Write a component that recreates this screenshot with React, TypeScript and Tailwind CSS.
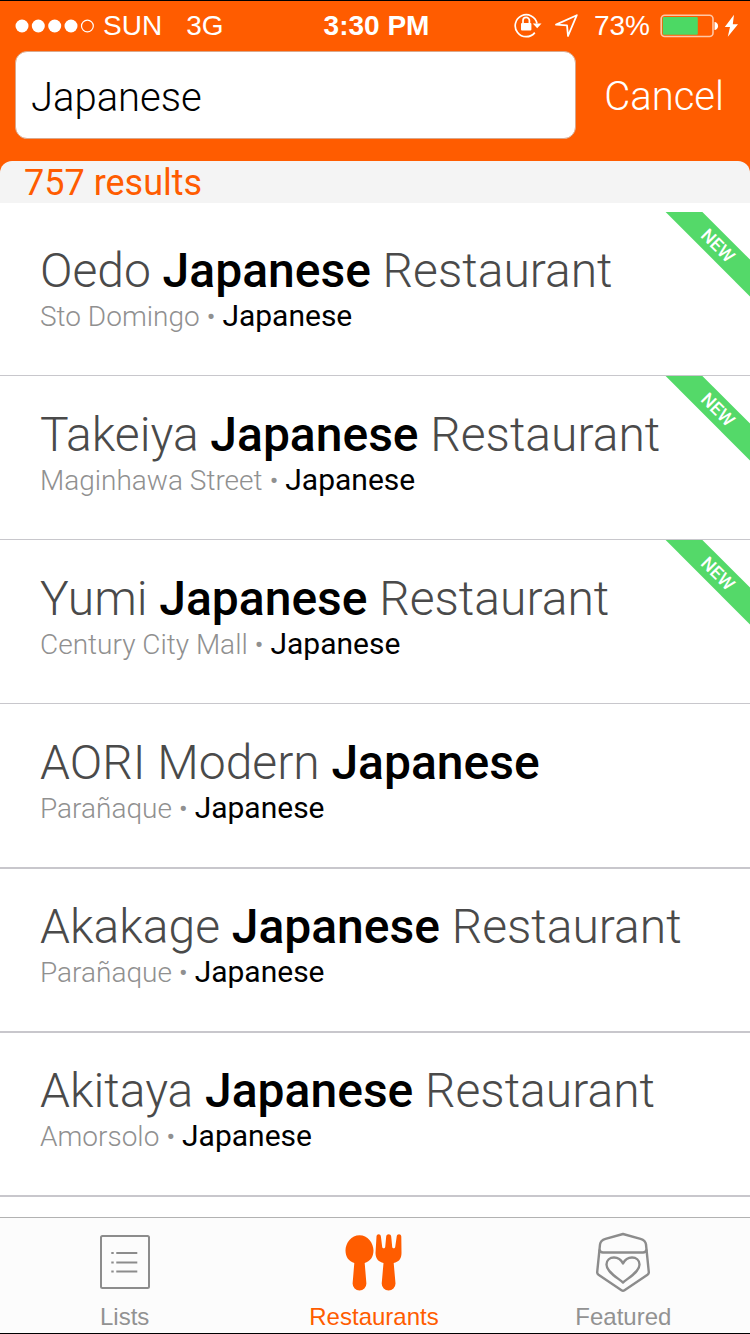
import { useState } from 'react';

type Restaurant = {
  before: string;
  after?: string;
  area: string;
  isNew?: boolean;
};

const restaurants: Restaurant[] = [
  { before: 'Oedo', after: 'Restaurant', area: 'Sto Domingo', isNew: true },
  { before: 'Takeiya', after: 'Restaurant', area: 'Maginhawa Street', isNew: true },
  { before: 'Yumi', after: 'Restaurant', area: 'Century City Mall', isNew: true },
  { before: 'AORI Modern', area: 'Parañaque' },
  { before: 'Akakage', after: 'Restaurant', area: 'Parañaque' },
  { before: 'Akitaya', after: 'Restaurant', area: 'Amorsolo' },
];

function SignalDots() {
  return (
    <svg width="80" height="14" viewBox="0 0 80 14" fill="#fff" aria-hidden="true">
      <circle cx="7" cy="7" r="6.5" />
      <circle cx="23.3" cy="7" r="6.5" />
      <circle cx="39.7" cy="7" r="6.5" />
      <circle cx="56" cy="7" r="6.5" />
      <circle cx="72.4" cy="7" r="5.9" fill="none" stroke="#fff" strokeWidth="1.2" />
    </svg>
  );
}

function RotationLockIcon() {
  return (
    <svg width="28" height="26" viewBox="0 0 28 26" fill="none" stroke="#fff" aria-hidden="true">
      <path d="M20.8 19.6A11 11 0 1 1 23 10.5" strokeWidth="1.7" />
      <path d="M18.8 10.5h8.7l-4.3 4.7z" fill="#fff" stroke="none" />
      <rect x="7" y="10" width="10.4" height="7.5" rx="1" fill="#fff" stroke="none" />
      <path d="M9 10.5V7.6a3.2 3.2 0 0 1 6.4 0v2.9" strokeWidth="1.7" />
    </svg>
  );
}

function LocationIcon() {
  return (
    <svg width="24" height="24" viewBox="0 0 24 24" fill="none" stroke="#fff" strokeWidth="1.8" aria-hidden="true">
      <path d="M22.8 1.2 2 10.6 13 11.4 14 22z" strokeLinejoin="round" />
    </svg>
  );
}

function BatteryIcon() {
  return (
    <svg width="78" height="24" viewBox="0 0 78 24" aria-hidden="true">
      <rect x="1.2" y="1.3" width="51.8" height="21.2" rx="3.5" fill="none" stroke="#ffc7a6" strokeWidth="1.6" />
      <rect x="2.8" y="3" width="35" height="17.8" rx="1" fill="#4cd964" />
      <path d="M54.5 8c2 0 3.6 1.7 3.6 4s-1.6 4-3.6 4z" fill="#fff" />
      <path d="M74 .8 64.8 13H70l-2.200 9.800L78 10.300h-5.200z" fill="#fff" />
    </svg>
  );
}

function ListsIcon() {
  return (
    <svg width="50" height="60" viewBox="0 0 50 60" fill="none" stroke="#8c8c8c" strokeWidth="2" aria-hidden="true">
      <rect x="1" y="4" width="48" height="52" rx="1.5" />
      <path d="M16.3 21h21M16.3 30.5h21M16.3 39.5h21M11.3 21h2.4M11.3 30.5h2.4M11.3 39.5h2.4" />
    </svg>
  );
}

function CutleryIcon() {
  return (
    <svg width="58" height="60" viewBox="0 0 58 60" fill="#ff5c00" aria-hidden="true">
      <path d="M14.5 3.3C22.5 3.3 28.5 11 28.5 18.5C28.5 25 25 29.5 19.7 31L21.4 51.5A6.900 6.900 0 0 1 7.600 51.5L9.300 31C4 29.500.5 25 .5 18.500C.5 11 6.500 3.300 14.500 3.300Z" />
      <path d="M31.5 4.5C31.7 1.5 35.6 1.5 35.9 4.500L37.200 15C37.400 16.700 40 16.700 40.200 15L41.200 4.500C41.500 1.500 45.900 1.500 46.200 4.500L47.200 15C47.400 16.700 50 16.700 50.200 15L51.700 4.500C52 1.500 56 1.500 56.300 4.500L56.500 21C56.500 27 53.500 30 48.700 31L50.500 51.500A6.900 6.900 0 0 1 36.700 51.500L38.500 31C34 30 30.500 27 30.500 21Z" />
    </svg>
  );
}

function ShieldHeartIcon() {
  return (
    <svg width="56" height="60" viewBox="0 0 56 60" fill="none" stroke="#8c8c8c" strokeWidth="2.4" strokeLinejoin="round" aria-hidden="true">
      <path d="M28 2 45.5 6.800Q50.500 8.200 51 12.500L53.800 40Q54 41.700 52.500 42.700L29.500 58.200Q28 59.200 26.500 58.200L3.500 42.700Q2 41.700 2.200 40L5 12.500Q5.500 8.200 10.500 6.800Z" />
      <path d="M4.500 17.500Q5 20.500 8 20.500H48Q51 20.500 51.500 17.500" />
      <path d="M28 50.500C23 46 11.500 40 11.500 32.500C11.500 28 15 25.500 19 25.500C23.500 25.500 26.500 28.500 28 31.500C29.500 28.500 32.500 25.500 37 25.500C41 25.500 44.500 28 44.500 32.500C44.500 40 33 46 28 50.500Z" />
    </svg>
  );
}

const tabs = [
  { label: 'Lists', Icon: ListsIcon, active: false },
  { label: 'Restaurants', Icon: CutleryIcon, active: true },
  { label: 'Featured', Icon: ShieldHeartIcon, active: false },
];

function NewRibbon() {
  return (
    <div className="absolute top-0 right-0 size-[85px] overflow-hidden">
      <span className="absolute top-5 -left-7 block w-40 rotate-45 bg-[#54d969] pl-0.5 text-center text-[18px] leading-[26px] font-medium text-white">
        NEW
      </span>
    </div>
  );
}

function RestaurantRow({ restaurant }: { restaurant: Restaurant }) {
  const { before, after, area, isNew } = restaurant;
  return (
    <li className={`relative shrink-0 border-b border-[#c8c7cc] ${isNew ? '' : 'shadow-[0_1px_0_#c8c7cc]'}`}>
      <a href="#restaurant" className="block px-10 pt-8 pb-10">
        <h2 className="text-[48px] leading-[54px] font-light whitespace-nowrap text-[#4a4a4a]">
          {before} <span className="font-medium text-black">Japanese</span> {after}
        </h2>
        <p className="text-[28px] leading-[37px] font-light whitespace-nowrap text-[#909090]">
          {area} • <span className="text-[30px] leading-none font-normal text-black">Japanese</span>
        </p>
      </a>
      {isNew && <NewRibbon />}
    </li>
  );
}

export default function App() {
  const [query, setQuery] = useState('Japanese');

  return (
    <div className="flex h-screen flex-col overflow-hidden border-y border-black bg-white font-[Roboto,sans-serif]">
      <header className="shrink-0 bg-[#ff5c00]">
        <div className="grid h-[50px] grid-cols-[1fr_auto_1fr] items-center pr-3 pl-[15px] font-['Liberation_Sans',sans-serif] text-[28px] leading-8 text-white">
          <div className="flex items-center gap-2">
            <SignalDots />
            <span>SUN</span>
            <span className="ml-4">3G</span>
          </div>
          <div className="font-bold">3:30 PM</div>
          <div className="flex items-center justify-end gap-2">
            <RotationLockIcon />
            <span className="mr-2 ml-1">
              <LocationIcon />
            </span>
            <span className="mr-0.5">73%</span>
            <BatteryIcon />
          </div>
        </div>
        <form className="flex items-center pb-[22px] pl-[15px]" onSubmit={(e) => e.preventDefault()}>
          <input
            type="text"
            aria-label="Search restaurants"
            value={query}
            onChange={(e) => setQuery(e.target.value)}
            className="h-[88px] min-w-0 flex-1 rounded-xl border border-[#d9a88c] bg-white px-[15px] pt-1 text-[40px] font-light text-black outline-none"
          />
          <button type="button" className="pt-[3px] pr-[26px] pl-7 text-[40px] leading-12 font-light text-white">
            Cancel
          </button>
        </form>
        <p className="rounded-t-xl bg-[#f4f4f4] px-6 pt-0.5 text-[36px] leading-10 text-[#ff5c00]">757 results</p>
      </header>

      <main className="min-h-0 flex-1 overflow-hidden pt-[9px]">
        <ul className="flex flex-col">
          {restaurants.map((r) => (
            <RestaurantRow key={r.before} restaurant={r} />
          ))}
        </ul>
      </main>

      <nav className="grid shrink-0 grid-cols-3 border-t border-[#b2b2b2] bg-[#fcfcfc] pr-0.5 font-['Liberation_Sans',sans-serif] text-2xl leading-7">
        {tabs.map(({ label, Icon, active }) => (
          <a
            key={label}
            href="#tab"
            aria-current={active ? 'page' : undefined}
            className={`flex flex-col items-center gap-[11px] pt-[14px] pb-0.5 ${active ? 'text-[#ff5c00]' : 'text-[#929292]'}`}
          >
            <Icon />
            {label}
          </a>
        ))}
      </nav>
    </div>
  );
}
